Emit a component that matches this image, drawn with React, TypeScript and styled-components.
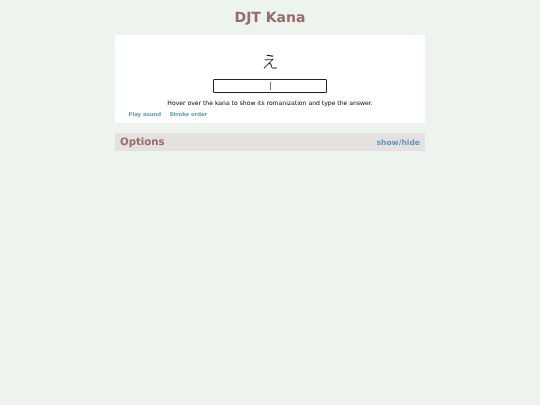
import styled, { createGlobalStyle } from "styled-components";

const GlobalStyle = createGlobalStyle`
  html, body {
    margin: 0;
    padding: 0;
    background: #edf3ed;
    font-family: "DejaVu Sans", Verdana, sans-serif;
    text-rendering: geometricPrecision;
  }
`;

const Page = styled.div`
  width: 310px;
  margin: 0 auto;
  min-height: 405px;
  filter: blur(0.25px);
`;

const Title = styled.h1`
  margin: 0;
  padding-top: 9px;
  height: 26px;
  line-height: 18px;
  font-size: 14px;
  font-weight: bold;
  text-align: center;
  color: #966b6b;
`;

const Card = styled.div`
  box-sizing: border-box;
  height: 88px;
  background: #fff;
  padding-top: 14px;
`;

const Kana = styled.div`
  height: 24px;
  line-height: 24px;
  font-size: 17px;
  font-weight: 300;
  text-align: center;
  color: #000;
  font-family: "Noto Sans CJK JP", sans-serif;
`;

const AnswerField = styled.div`
  position: relative;
  box-sizing: border-box;
  width: 114px;
  height: 14px;
  margin: 6px auto 0;
  border: 1px solid #222;
  border-radius: 1px;
  background: #fff;
`;

const Caret = styled.span`
  position: absolute;
  left: 56px;
  top: 2px;
  width: 1px;
  height: 8px;
  background: #777;
`;

const Hint = styled.p`
  margin: 5.5px 0 0;
  line-height: 9px;
  font-size: 6.1px;
  text-align: center;
  color: #000;
`;

const Links = styled.div`
  display: flex;
  gap: 8.5px;
  margin-top: 3.5px;
  padding-left: 13.5px;
`;

const ActionLink = styled.a`
  font-size: 5.3px;
  line-height: 8px;
  font-weight: bold;
  color: #5d9ab5;
`;

const OptionsBar = styled.div`
  display: flex;
  justify-content: space-between;
  align-items: center;
  box-sizing: border-box;
  height: 18px;
  margin-top: 10px;
  padding: 0 5px;
  background: #e5e1e1;
`;

const OptionsTitle = styled.h2`
  margin: 0;
  padding-top: 1px;
  font-size: 10.2px;
  font-weight: bold;
  color: #966b6b;
`;

const Toggle = styled.a`
  font-size: 7.6px;
  font-weight: bold;
  color: #5d9ab5;
`;

export default function App() {
  return (
    <>
      <GlobalStyle />
      <Page>
        <Title>DJT Kana</Title>
        <Card>
          <Kana>え</Kana>
          <AnswerField>
            <Caret />
          </AnswerField>
          <Hint>Hover over the kana to show its romanization and type the answer.</Hint>
          <Links>
            <ActionLink>Play sound</ActionLink>
            <ActionLink>Stroke order</ActionLink>
          </Links>
        </Card>
        <OptionsBar>
          <OptionsTitle>Options</OptionsTitle>
          <Toggle>show/hide</Toggle>
        </OptionsBar>
      </Page>
    </>
  );
}
